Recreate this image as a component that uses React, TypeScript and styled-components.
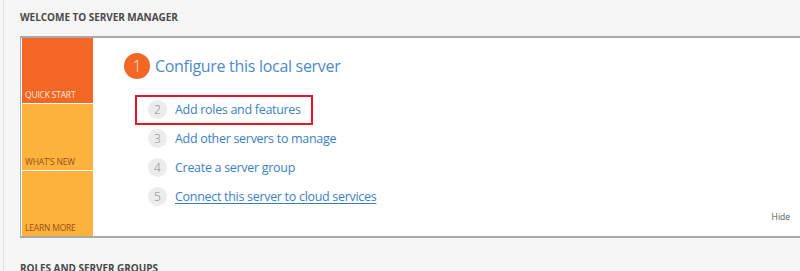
import styled, { createGlobalStyle } from "styled-components";

const GlobalStyle = createGlobalStyle`
    html, body {
        margin: 0;
        padding: 0;
        background: #f6f6f6;
        overflow: hidden;
    }
    body {
        font-family: "Open Sans", "Noto Sans", sans-serif;
    }
`;

const Page = styled.div`
    width: 800px;
    height: 271px;
    box-sizing: border-box;
    margin-left: 3px;
    padding-left: 16px;
    border-left: 1px solid #e2e2e2;
    overflow: hidden;
`;

const SectionTitle = styled.h2<{ $top: number }>`
    margin: 0;
    padding-top: ${(p) => p.$top}px;
    height: 12px;
    font-size: 10px;
    line-height: 12px;
    font-weight: 700;
    letter-spacing: -0.05px;
    color: #4a4a4a;
`;

const Panel = styled.div`
    margin-top: 13px;
    width: 792px;
    height: 202px;
    box-sizing: border-box;
    display: flex;
    background: #ffffff;
    border: 1px solid #a9a9a9;
    border-top-width: 2px;
    border-bottom-width: 2px;
`;

const Tiles = styled.div`
    width: 71px;
    display: flex;
    flex-direction: column;
    gap: 1px;
    padding-left: 1px;
`;

const Tile = styled.div<{ $main?: boolean }>`
    flex: 1;
    display: flex;
    align-items: flex-end;
    padding: 0 0 3px 3px;
    background: ${(p) => (p.$main ? "#f26724" : "#feb23e")};
    color: ${(p) => (p.$main ? "#ffe9dc" : "#9a4f14")};
    font-size: 8.5px;
    line-height: 11px;
    letter-spacing: -0.2px;
`;

const Content = styled.div`
    flex: 1;
    position: relative;
    padding: 15px 0 0 31px;
`;

const Heading = styled.div`
    display: flex;
    align-items: center;
    gap: 5px;
`;

const Step = styled.span<{ $main?: boolean }>`
    flex: none;
    width: ${(p) => (p.$main ? 26 : 19)}px;
    height: ${(p) => (p.$main ? 26 : 19)}px;
    border-radius: 50%;
    display: flex;
    align-items: center;
    justify-content: center;
    background: ${(p) => (p.$main ? "#f26724" : "#ececec")};
    color: ${(p) => (p.$main ? "#ffe3d2" : "#888888")};
    font-size: ${(p) => (p.$main ? 16 : 12)}px;
    font-weight: 300;
`;

const HeadingText = styled.span`
    font-size: 16px;
    font-weight: 400;
    letter-spacing: -0.3px;
    color: #4d8bc8;
`;

const Items = styled.div`
    display: flex;
    flex-direction: column;
    margin: 16px 0 0 24px;
`;

const Item = styled.div<{ $marked?: boolean }>`
    position: relative;
    height: 29px;
    display: flex;
    align-items: center;
    gap: 8px;
    width: fit-content;

    &::after {
        content: "";
        display: ${(p) => (p.$marked ? "block" : "none")};
        position: absolute;
        left: -13px;
        right: -12px;
        top: 0;
        bottom: -1px;
        border: 2px solid #e8141f;
    }
`;

const ItemText = styled.span<{ $link?: boolean }>`
    font-size: 12.5px;
    letter-spacing: -0.3px;
    color: #3d80c2;
    text-decoration: ${(p) => (p.$link ? "underline" : "none")};
    text-underline-offset: 2px;
`;

const Hide = styled.span`
    position: absolute;
    right: 21px;
    bottom: 14px;
    font-size: 8.5px;
    color: #555555;
`;

const steps = [
    { n: 2, text: "Add roles and features", marked: true },
    { n: 3, text: "Add other servers to manage" },
    { n: 4, text: "Create a server group" },
    { n: 5, text: "Connect this server to cloud services", link: true },
];

const App = () => {
    return (
        <Page>
            <GlobalStyle />
            <SectionTitle $top={11}>WELCOME TO SERVER MANAGER</SectionTitle>
            <Panel>
                <Tiles>
                    <Tile $main>QUICK START</Tile>
                    <Tile>WHAT'S NEW</Tile>
                    <Tile>LEARN MORE</Tile>
                </Tiles>
                <Content>
                    <Heading>
                        <Step $main>1</Step>
                        <HeadingText>Configure this local server</HeadingText>
                    </Heading>
                    <Items>
                        {steps.map((s) => (
                            <Item key={s.n} $marked={s.marked}>
                                <Step>{s.n}</Step>
                                <ItemText $link={s.link}>{s.text}</ItemText>
                            </Item>
                        ))}
                    </Items>
                    <Hide>Hide</Hide>
                </Content>
            </Panel>
            <SectionTitle $top={24}>ROLES AND SERVER GROUPS</SectionTitle>
        </Page>
    );
};

export default App;
